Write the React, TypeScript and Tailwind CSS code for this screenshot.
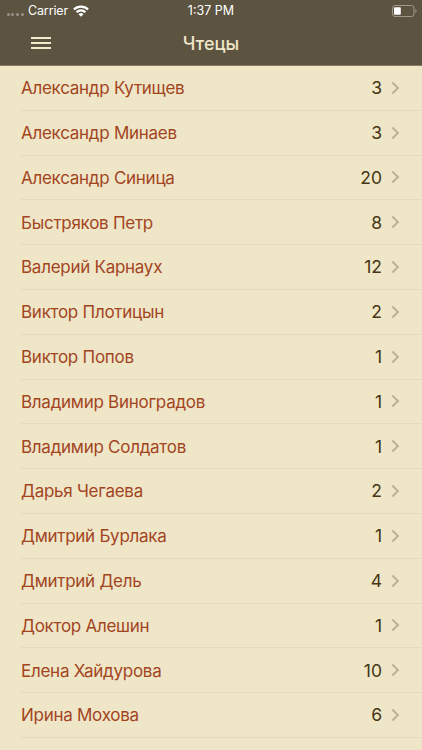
interface Reader {
  name: string;
  count: number;
}

const readers: Reader[] = [
  { name: 'Александр Кутищев', count: 3 },
  { name: 'Александр Минаев', count: 3 },
  { name: 'Александр Синица', count: 20 },
  { name: 'Быстряков Петр', count: 8 },
  { name: 'Валерий Карнаух', count: 12 },
  { name: 'Виктор Плотицын', count: 2 },
  { name: 'Виктор Попов', count: 1 },
  { name: 'Владимир Виноградов', count: 1 },
  { name: 'Владимир Солдатов', count: 1 },
  { name: 'Дарья Чегаева', count: 2 },
  { name: 'Дмитрий Бурлака', count: 1 },
  { name: 'Дмитрий Дель', count: 4 },
  { name: 'Доктор Алешин', count: 1 },
  { name: 'Елена Хайдурова', count: 10 },
  { name: 'Ирина Мохова', count: 6 },
];

function WifiIcon() {
  return (
    <svg width="16" height="12" viewBox="0 0 16 12" fill="none" stroke="#fff" strokeWidth="2.2">
      <path d="M.9 4.5a10 10 0 0 1 14.2 0" />
      <path d="M3.6 7.3a6.2 6.2 0 0 1 8.8 0" />
      <path d="M8 11.8 5.5 9.2a3.5 3.5 0 0 1 5 0Z" fill="#fff" stroke="none" />
    </svg>
  );
}

function BatteryIcon() {
  return (
    <svg width="26" height="12" viewBox="0 0 26 12" fill="none">
      <rect x="0.5" y="0.5" width="21.5" height="11" rx="2.5" stroke="#a09a8d" />
      <rect x="2" y="2.2" width="6.8" height="7.6" rx="0.8" fill="#fff" />
      <path d="M23.3 4.2c1.8.6 1.8 3 0 3.6Z" fill="#a09a8d" />
    </svg>
  );
}

function StatusBar() {
  return (
    <div className="grid h-[21px] grid-cols-3 items-center text-[12.5px] leading-5 text-white">
      <div className="flex items-center pl-[6.5px]">
        <div className="flex gap-[1.8px] pt-[7px]">
          {[0, 1, 2, 3].map((dot) => (
            <span key={dot} className="size-[3px] rounded-full bg-[#999387]" />
          ))}
        </div>
        <span className="ml-[4px] tracking-[-0.1px]">Carrier</span>
        <span className="ml-[5px]">
          <WifiIcon />
        </span>
      </div>
      <div className="text-center">1:37 PM</div>
      <div className="flex justify-end pr-[4px]">
        <BatteryIcon />
      </div>
    </div>
  );
}

function NavBar() {
  return (
    <div className="grid h-[44px] grid-cols-3 items-center">
      <button className="ml-[31px] flex w-5 flex-col gap-[3px]" aria-label="Меню">
        <span className="h-[2px] w-full bg-[#f3e9cc]" />
        <span className="h-[2px] w-full bg-[#f3e9cc]" />
        <span className="h-[2px] w-full bg-[#f3e9cc]" />
      </button>
      <h1 className="text-center text-[18px] font-medium text-[#f0e6c8]">Чтецы</h1>
    </div>
  );
}

function ReaderRow({ name, count }: Reader) {
  return (
    <li className="ml-[21px] flex h-[44.8px] items-center border-b border-[#e7dabb] pt-[1px] pr-[22px]">
      <span className="flex-1 pt-[1px] text-[17px] tracking-[-0.27px] text-[#a2451f]">{name}</span>
      <span className="text-[17.5px] text-[#463615]">{count}</span>
      <svg className="mb-[1px] ml-[9px]" width="9" height="14" viewBox="0 0 9 14" fill="none">
        <path d="M1.3 1.5 6.9 7l-5.6 5.5" stroke="#bbb194" strokeWidth="2" />
      </svg>
    </li>
  );
}

export default function App() {
  return (
    <div className="h-[750px] overflow-hidden bg-[#efe6c8] font-['Inter','Noto_Sans',sans-serif]">
      <header className="h-[66px] border-b border-[#8a7a64] bg-[#5c5340]">
        <StatusBar />
        <NavBar />
      </header>
      <ul>
        {readers.map((reader) => (
          <ReaderRow key={reader.name} name={reader.name} count={reader.count} />
        ))}
      </ul>
    </div>
  );
}
